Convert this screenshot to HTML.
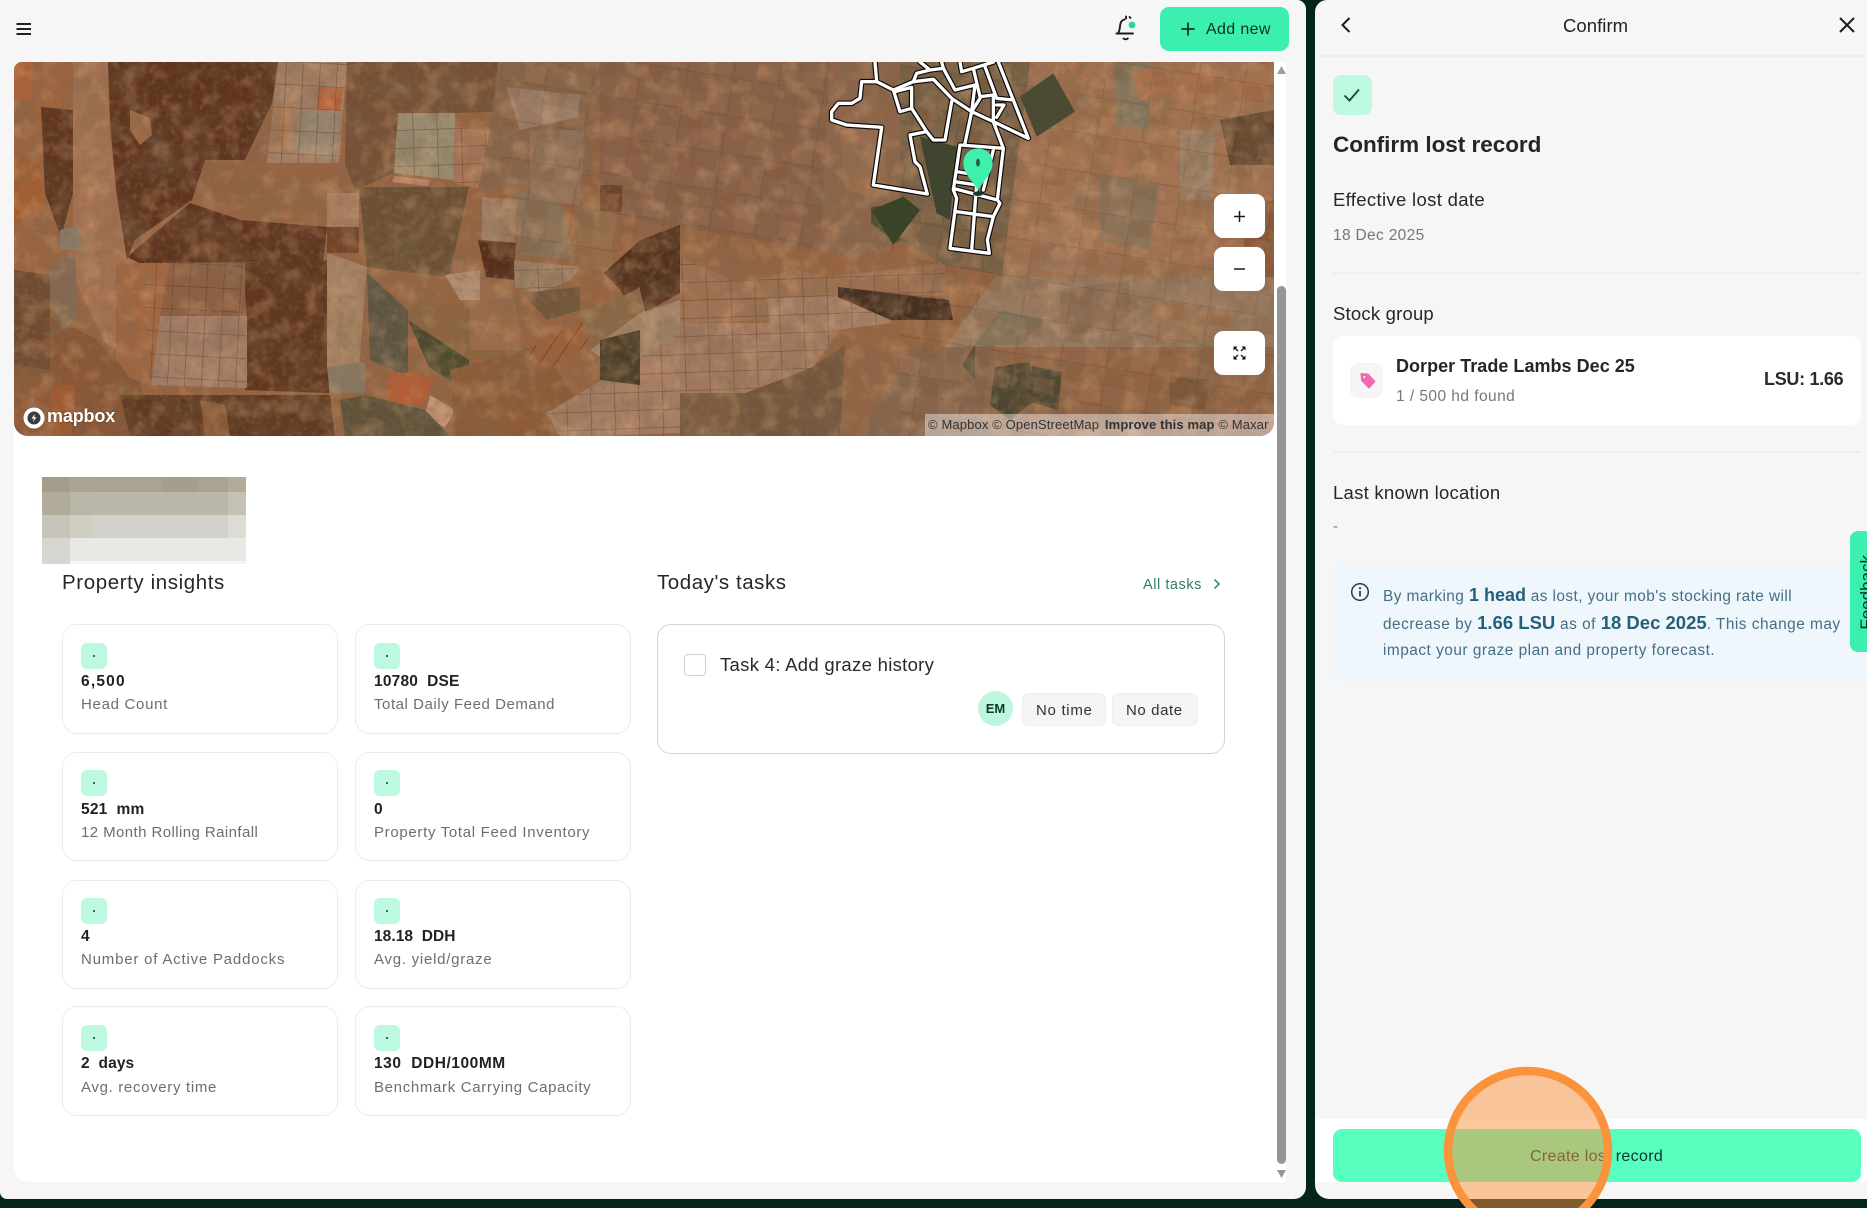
<!DOCTYPE html>
<html lang="en">
<head>
<meta charset="utf-8">
<title>Confirm lost record</title>
<style>
html,body{margin:0;padding:0;width:1867px;height:1208px;overflow:hidden;background:#03251c;font-family:"Liberation Sans",sans-serif;color:#1f1f1f}
.a{position:absolute}
.t{position:absolute;white-space:nowrap;line-height:1}
.card{position:absolute;box-sizing:border-box;width:276px;background:#fff;border:1px solid #ececec;border-radius:15px}
.ic{position:absolute;width:26px;height:26px;background:#bdf8e0;border-radius:6px}
.ic:after{content:"";position:absolute;left:12px;top:12px;width:2px;height:2px;border-radius:50%;background:#0b3b2d}
.v{font-size:15.5px;font-weight:bold;letter-spacing:.55px;color:#222}
.l{font-size:15px;letter-spacing:.8px;color:#6e6e6e}
.h{font-size:18.5px;letter-spacing:.2px;color:#272727}
.p{font-size:15.4px;letter-spacing:.5px;color:#446f84}
.p b{font-size:18px;letter-spacing:0;color:#24607b}
.mb{position:absolute;left:1214px;width:51px;height:44px;background:#fff;border-radius:9px}
</style>
</head>
<body>
<!-- left panel -->
<div class="a" style="left:0;top:0;width:1306px;height:1199px;background:#f6f6f6;border-radius:0 9px 12px 7px"></div>
<!-- right panel -->
<div class="a" style="left:1315px;top:0;width:552px;height:1199px;background:#f6f6f6;border-radius:12px 0 0 14px"></div>
<!-- white content -->
<div class="a" style="left:14px;top:62px;width:1272px;height:1120px;background:#fff;border-radius:10px 0 0 14px"></div>

<!-- hamburger -->
<svg class="a" style="left:14px;top:20px" width="20" height="18" viewBox="0 0 20 18"><path d="M2.500 4H17M2.500 9H17M2.500 14H17" stroke="#222" stroke-width="1.900" fill="none"/></svg>

<!-- bell -->
<svg class="a" style="left:1112px;top:12px" width="28" height="32" viewBox="0 0 28 32"><path d="M6 21.500c1.600-2.500 1.800-5 2.100-8 .3-3 1.800-5.500 4.400-6M14 4.500v2M17.500 5l1 1M4.500 21.500H21M11.500 26.500c1.300 1 3 1 4.300 0" stroke="#1c1c1c" stroke-width="1.900" fill="none" stroke-linecap="round"/><circle cx="20" cy="13" r="3.400" fill="#2ed39a"/></svg>

<!-- add new -->
<div class="a" style="left:1160px;top:7px;width:129px;height:44px;background:#3bf0ae;border-radius:9px"></div>
<svg class="a" style="left:1180px;top:21px" width="16" height="16" viewBox="0 0 16 16"><path d="M8 1.500V14.500M1.500 8H14.500" stroke="#0c2f25" stroke-width="1.700" fill="none"/></svg>
<div class="t" style="left:1206px;top:22px;font-size:16px;letter-spacing:.36px;color:#0c2f25">Add new</div>

<!-- map -->
<div class="a" style="left:14px;top:62px;width:1260px;height:374px;overflow:hidden;border-radius:8px 0 14px 14px">
<svg width="1260" height="374" viewBox="14 62 1260 374" style="display:block">
<defs>
<pattern id="g1" width="17" height="23" patternUnits="userSpaceOnUse" patternTransform="rotate(3)"><path d="M0 0H17M0 0V23" stroke="#4c2d1d" stroke-opacity=".6" stroke-width="1.300" fill="none"/></pattern>
<pattern id="g2" width="24" height="18" patternUnits="userSpaceOnUse" patternTransform="rotate(-2)"><path d="M0 0H24M0 0V18" stroke="#4c2d1d" stroke-opacity=".6" stroke-width="1.200" fill="none"/></pattern>
<pattern id="g3" width="13" height="60" patternUnits="userSpaceOnUse" patternTransform="rotate(34)"><path d="M0 0V60" stroke="#402618" stroke-opacity=".65" stroke-width="1.500" fill="none"/></pattern>
<pattern id="g4" width="46" height="38" patternUnits="userSpaceOnUse" patternTransform="rotate(9)"><path d="M0 0H46M0 0V38" stroke="#4a2e1d" stroke-opacity=".32" stroke-width="1.400" fill="none"/><rect x="2" y="2" width="20" height="16" fill="#7c5233" fill-opacity=".22"/><rect x="24" y="20" width="20" height="16" fill="#c18a62" fill-opacity=".2"/></pattern>
<filter id="n1" x="0" y="0" width="100%" height="100%"><feTurbulence type="fractalNoise" baseFrequency=".028" numOctaves="4" seed="7"/><feColorMatrix values="0 0 0 0 .2  0 0 0 0 .13  0 0 0 0 .07  0 0 0 2.200 -.95"/></filter>
<filter id="n2" x="0" y="0" width="100%" height="100%"><feTurbulence type="fractalNoise" baseFrequency=".05" numOctaves="3" seed="21"/><feColorMatrix values="0 0 0 0 .72  0 0 0 0 .4  0 0 0 0 .2  0 0 0 2.200 -1.050"/></filter>
<filter id="n3" x="0" y="0" width="100%" height="100%"><feTurbulence type="fractalNoise" baseFrequency=".16" numOctaves="2" seed="4"/><feColorMatrix values="0 0 0 0 .22  0 0 0 0 .16  0 0 0 0 .1  0 0 0 3 -1.500"/></filter>
</defs>
<rect x="14" y="62" width="1260" height="374" fill="#9a6a4a"/>
<!-- broad tones, left side -->
<polygon points="14,62 73,62 73,280 14,300" fill="#a06a47"/>
<polygon points="73,62 108,62 110,137 122,227 139,260 139,353 114,360 73,277" fill="#aa7a5c"/>
<polygon points="14,300 141,360 141,436 14,436" fill="#8a5a3c"/>
<polygon points="41,107 73,110 73,193 61,237 45,193" fill="#5a3420"/>
<polygon points="14,62 32,62 32,100 14,100" fill="#b5693f"/>
<polygon points="14,155 40,160 42,210 14,225" fill="#ad6336"/>
<polygon points="14,270 50,275 50,370 14,365" fill="#6d4a33"/>
<polygon points="108,62 278,62 272,103 245,160 205,160 192,200 135,240 127,260 116,190 110,120" fill="#583220"/>
<polygon points="127,257 190,203 241,220 327,227 323,262 139,263" fill="#583220"/>
<polygon points="130,110 150,118 152,135 140,145 130,130" fill="#a0704f"/>
<polygon points="205,163 245,163 262,135 268,170 260,205 235,213 198,200" fill="#94684a"/>
<polygon points="50,265 75,250 78,320 62,330 50,300" fill="#85705e"/>
<polygon points="60,230 80,225 82,250 60,250" fill="#8f8a7c"/>
<polygon points="245,263 327,260 329,393 245,390" fill="#5a3420"/>
<polygon points="14,375 60,378 60,436 14,436" fill="#93603e"/>
<polygon points="50,385 75,385 72,436 48,436" fill="#a85e36"/>
<polygon points="120,395 330,395 335,436 130,436" fill="#5b3824"/>
<polygon points="200,400 225,405 230,436 205,436" fill="#8a5b3c"/>
<polygon points="116,265 141,263 151,385 130,378 116,360" fill="#a36c49"/>
<!-- top-left farm -->
<polygon points="278,62 347,62 339,163 267,163" fill="#a98a72"/>
<polygon points="318,87 343,87 340,110 316,110" fill="#c7643f"/>
<polygon points="278,105 292,105 288,145 272,145" fill="#b57f5c"/>
<polygon points="300,110 340,112 335,160 295,150" fill="#9c9682"/>
<polygon points="278,62 347,62 339,163 267,163" fill="url(#g1)"/>
<!-- bottom left farm -->
<polygon points="141,263 243,263 247,320 160,316" fill="#8e644a"/>
<polygon points="160,316 247,316 247,388 151,385" fill="#ab8976"/>
<polygon points="141,263 170,263 160,316 151,385 136,380" fill="#a96e48"/>
<polygon points="141,263 243,263 247,388 151,385" fill="url(#g1)"/>
<!-- centre-left -->
<polygon points="347,62 498,62 495,112 455,113 398,113 394,173 355,190 345,165" fill="#74523a"/>
<polygon points="398,113 455,113 453,180 394,173" fill="#9d9a84"/>
<polygon points="455,127 492,132 486,190 453,183" fill="#b07f64"/>
<polygon points="398,113 455,113 453,180 394,173" fill="url(#g2)"/>
<polygon points="455,127 492,132 486,190 453,183" fill="url(#g2)"/>
<polygon points="394,176 430,180 428,186 392,182" fill="#c79478"/>
<polygon points="327,193 359,193 359,227 327,227" fill="#b08a6e"/>
<polygon points="327,227 359,227 359,253 327,253" fill="#70432a"/>
<polygon points="327,253 367,267 359,367 327,367" fill="#ad8d70"/>
<polygon points="327,367 365,362 365,393 330,393" fill="#8a8370"/>
<polygon points="359,187 469,187 449,277 367,267" fill="#65523a"/>
<polygon points="367,273 408,310 408,377 370,360" fill="#55584a"/>
<polygon points="408,310 470,300 520,300 515,360 469,360 408,320" fill="#8e6a48"/>
<polygon points="408,320 469,360 469,393 429,367" fill="#3f4a2f"/>
<polygon points="386,370 437,377 424,403 388,403" fill="#bf623c"/>
<polygon points="430,395 455,410 445,428 425,415" fill="#d3a48b"/>
<polygon points="365,395 425,410 450,436 345,436 340,400" fill="#5a5640"/>
<polygon points="450,370 540,345 600,436 455,436" fill="#8f5f3e"/>
<!-- upper centre -->
<polygon points="498,62 600,62 590,180 478,190 490,130" fill="#8a6a52"/>
<polygon points="506,87 580,95 578,117 520,130" fill="#a08a78"/>
<polygon points="530,130 585,130 580,205 530,200" fill="#937a66"/>
<polygon points="600,62 830,62 820,250 600,215" fill="#8a6550"/>
<polygon points="600,185 622,185 622,212 600,210" fill="#6b4530"/>
<polygon points="482,197 518,200 514,242 482,240" fill="#a58a72"/>
<polygon points="478,240 516,243 514,280 486,277" fill="#4f2b1c"/>
<polygon points="516,190 560,200 575,260 520,255" fill="#8a7a64"/>
<polygon points="575,205 620,215 610,275 580,265" fill="#9a7454"/>
<polygon points="604,273 640,240 680,225 680,293 638,317 620,290" fill="#4a2f1f"/>
<polygon points="604,273 640,240 680,225 680,293 638,317 620,290" fill="url(#g3)"/>
<polygon points="514,260 580,267 571,280 539,293 514,287" fill="#a58f78"/>
<polygon points="514,260 580,267 571,280 539,293 514,287" fill="url(#g2)"/>
<polygon points="522,293 580,287 580,310 547,320" fill="#6f5a41"/>
<polygon points="470,275 514,290 522,350 470,350" fill="#a07352"/>
<polygon points="445,275 480,270 480,300 460,300" fill="#b89a82"/>
<polygon points="522,353 640,287 640,313 547,370" fill="#a06640"/>
<polygon points="522,353 640,287 640,313 547,370" fill="url(#g3)"/>
<polygon points="580,310 640,290 650,330 590,350" fill="#8c6e4e"/>
<rect x="500" y="62" width="400" height="190" fill="url(#g4)"/>
<!-- central big farms -->
<polygon points="680,257 738,283 796,270 829,277 945,263 945,297 838,287 838,333 771,333 767,298 680,300" fill="#a2795c"/>
<polygon points="680,257 738,283 796,270 829,277 829,300 680,300" fill="url(#g2)"/>
<polygon points="829,277 945,263 945,297 838,287" fill="url(#g2)"/>
<polygon points="680,300 767,300 767,320 680,323" fill="#a67c5f"/>
<polygon points="680,300 767,300 767,320 680,323" fill="url(#g2)"/>
<polygon points="767,298 891,295 891,323 838,330 771,333" fill="#ac8a73"/>
<polygon points="767,298 891,295 891,323 838,330 771,333" fill="url(#g2)"/>
<polygon points="838,287 949,300 953,320 891,320 838,297" fill="#3c2c22"/>
<polygon points="680,323 771,323 838,333 813,367 746,393 680,393" fill="#a8846e"/>
<polygon points="680,323 771,323 838,333 813,367 746,393 680,393" fill="url(#g2)"/>
<polygon points="547,413 680,333 680,433 597,436 560,436" fill="#ae8a73"/>
<polygon points="547,413 680,333 680,436 560,436" fill="url(#g2)"/>
<polygon points="640,313 680,300 680,333 620,370 590,350" fill="#ad927a"/>
<polygon points="600,340 640,330 640,385 600,380" fill="#3f3d2a"/>
<polygon points="680,393 746,393 730,436 680,436" fill="#7a6048"/>
<polygon points="746,393 813,367 845,345 840,436 730,436" fill="#705a44"/>
<!-- right side -->
<polygon points="830,62 900,62 900,240 860,260 820,250" fill="#8f6c54"/>
<polygon points="840,130 880,125 890,200 845,190" fill="#9c7456"/>
<polygon points="871,207 929,200 920,227 896,243 871,223" fill="#3d4a30"/>
<polygon points="900,62 1030,62 1030,280 945,265 900,240" fill="#74654e"/>
<polygon points="1030,62 1274,62 1274,290 1000,290" fill="#a67a5b"/>
<polygon points="1115,62 1150,62 1150,130 1115,125" fill="#85806c"/>
<polygon points="1130,70 1274,70 1274,100 1140,100" fill="#ae7a57"/>
<polygon points="1220,120 1274,110 1274,165 1230,165" fill="#5f4a35"/>
<polygon points="1180,130 1215,130 1212,200 1180,200" fill="#a08e78"/>
<polygon points="1100,175 1160,185 1150,250 1100,240" fill="#8d7c66"/>
<polygon points="1040,210 1090,215 1085,275 1040,270" fill="#ad8266"/>
<polygon points="1240,210 1274,200 1274,345 1250,300" fill="#8c5d3c"/>
<polygon points="995,277 1274,277 1274,347 945,347" fill="#9a846e"/>
<polygon points="1060,290 1130,280 1130,330 1060,335" fill="#8d7662"/>
<polygon points="1150,300 1230,310 1235,345 1150,340" fill="#a27f62"/>
<polygon points="860,347 1274,347 1274,436 840,436" fill="#956a4d"/>
<polygon points="912,350 995,345 990,436 860,436" fill="#876c56"/>
<polygon points="995,367 1030,362 1035,400 1010,420 990,405" fill="#414735"/>
<polygon points="1032,366 1062,372 1058,410 1030,402" fill="#434735"/>
<polygon points="1170,375 1210,380 1205,410 1170,405" fill="#7d5a3f"/>
<polygon points="1000,310 1045,320 1020,345 975,345" fill="#7f7d68"/>
<polygon points="962,365 975,345 975,380" fill="#3e4a3b"/>
<rect x="900" y="62" width="374" height="374" fill="url(#g4)"/>
<!-- noise -->
<rect x="14" y="62" width="1260" height="374" fill="#8a4a20" opacity=".17"/>
<rect x="14" y="62" width="1260" height="374" filter="url(#n1)" opacity=".42"/>
<rect x="14" y="62" width="1260" height="374" filter="url(#n2)" opacity=".42"/>
<rect x="14" y="62" width="1260" height="374" filter="url(#n3)" opacity=".42"/>
<!-- diamond forest + paddock outlines in zoom coordinates -->
<g transform="translate(780 40) scale(.33333)">
<polygon points="820,100 885,215 770,290 720,170" fill="#4b4a33"/>
<polygon points="420,290 530,320 510,540 470,520 450,430" fill="#40452f"/>
<polygon points="275,510 370,470 420,510 340,615" fill="#39432a"/>
<g fill="none" stroke-linejoin="round" stroke-linecap="round">
<g stroke="#0b0b0b" stroke-width="17">
<path d="M285 66 290 125 245 125 240 175 215 190 175 190 155 215 155 240 200 255 305 262 280 435 442 462 420 380 405 365 390 285 440 275 460 300 495 300 515 185M290 125 340 150 400 125 460 118 515 175 575 215 640 245 745 295M340 150 360 215 395 205 440 275M345 155 395 142 395 205M400 125 410 100 450 90 420 66M450 90 490 85 525 150 585 135 575 215M490 85 485 66M540 66 545 95 580 85 640 66M580 85 600 170 640 165M615 80 650 175 700 180 745 295M655 66 745 295M600 175 575 215M640 170 640 245M650 195 672 195 650 232M640 245 670 325M575 215 555 310M540 315 670 325 652 480 660 490 640 530 622 600 628 640 510 625 530 475 520 450 540 315M520 445 652 480M530 395 590 405M525 425 590 435M530 515 640 530M590 430 575 630M640 330 610 450"/>
</g>
<g stroke="#fff" stroke-width="10">
<path d="M285 66 290 125 245 125 240 175 215 190 175 190 155 215 155 240 200 255 305 262 280 435 442 462 420 380 405 365 390 285 440 275 460 300 495 300 515 185M290 125 340 150 400 125 460 118 515 175 575 215 640 245 745 295M340 150 360 215 395 205 440 275M345 155 395 142 395 205M400 125 410 100 450 90 420 66M450 90 490 85 525 150 585 135 575 215M490 85 485 66M540 66 545 95 580 85 640 66M580 85 600 170 640 165M615 80 650 175 700 180 745 295M655 66 745 295M600 175 575 215M640 170 640 245M650 195 672 195 650 232M640 245 670 325M575 215 555 310M540 315 670 325 652 480 660 490 640 530 622 600 628 640 510 625 530 475 520 450 540 315M520 445 652 480M530 395 590 405M525 425 590 435M530 515 640 530M590 430 575 630M640 330 610 450"/>
</g>
</g>
<ellipse cx="594" cy="461" rx="15" ry="7" fill="#173a2a"/>
<path d="M594 452C580 425 550 402 550 368 550 343 570 325 594 325 618 325 638 343 638 368 638 402 608 425 594 452Z" fill="#3df0ab"/>
<ellipse cx="594" cy="368" rx="6" ry="12" fill="#2f5a48"/>
</g>
</svg>
<!-- mapbox logo -->
<svg class="a" style="left:8px;top:344px" width="24" height="24" viewBox="0 0 24 24"><circle cx="12" cy="12" r="10.500" fill="#fff"/><circle cx="12" cy="12" r="6.500" fill="#3c3c3c"/><path d="M12.800 8 9.500 12.500h2.300L11 16l3.500-4.800h-2.300z" fill="#fff"/></svg>
<div class="t" style="left:33px;top:345px;font-size:18px;font-weight:bold;letter-spacing:-.15px;color:#fff;text-shadow:0 0 2px rgba(0,0,0,.35)">mapbox</div>
<!-- attribution -->
<div class="a" style="left:911px;top:352px;width:349px;height:22px;background:rgba(255,255,255,.42)"></div>
<div class="t" style="left:914px;top:356px;font-size:13px;letter-spacing:.13px;color:#333">© Mapbox © OpenStreetMap <b style="margin-left:2px">Improve this map</b> © Maxar</div>
</div>

<!-- map controls -->
<div class="mb" style="top:194px"></div>
<div class="mb" style="top:247px"></div>
<div class="mb" style="top:331px"></div>
<svg class="a" style="left:1232px;top:209px" width="15" height="15" viewBox="0 0 15 15"><path d="M7.500 2V13M2 7.500H13" stroke="#1a1a1a" stroke-width="1.500" fill="none"/></svg>
<svg class="a" style="left:1232px;top:261px" width="15" height="15" viewBox="0 0 15 15"><path d="M2 8H13" stroke="#1a1a1a" stroke-width="1.500" fill="none"/></svg>
<svg class="a" style="left:1232px;top:345px" width="15" height="16" viewBox="0 0 15 16"><path d="M1.500 1.500H5.500L1.500 5.500ZM13.500 1.500H9.500L13.500 5.500ZM1.500 14.500H5.500L1.500 10.500ZM13.500 14.500H9.500L13.500 10.500Z" fill="#111"/><path d="M3 3 6 6M12 3 9 6M3 13 6 10M12 13 9 10" stroke="#111" stroke-width="1.300"/></svg>

<!-- scrollbar -->
<svg class="a" style="left:1276px;top:64px" width="11" height="12" viewBox="0 0 11 12"><path d="M5.500 2 10 10H1Z" fill="#a0a0a0"/></svg>
<div class="a" style="left:1277px;top:286px;width:9px;height:878px;background:#959595;border-radius:5px"></div>
<svg class="a" style="left:1276px;top:1169px" width="11" height="10" viewBox="0 0 11 10"><path d="M1 1H10L5.500 9Z" fill="#959595"/></svg>

<!-- blurred block -->
<svg class="a" style="left:42px;top:477px" width="204" height="87" viewBox="0 0 204 87" shape-rendering="crispEdges">
<rect width="204" height="15" fill="#a9a392"/><rect width="204" height="23" y="15" fill="#bbb7a8"/><rect width="204" height="23" y="38" fill="#d3d2ca"/><rect width="204" height="23" y="61" fill="#e8e8e4"/><rect width="204" height="3" y="84" fill="#f5f5f3"/>
<rect width="28" height="15" fill="#a49d8c"/><rect width="28" height="23" y="15" fill="#b0ab9b"/><rect width="28" height="23" y="38" fill="#c7c5bb"/><rect width="28" height="26" y="61" fill="#d7d7d2"/>
<rect x="28" width="22" height="23" y="38" fill="#d0cec2"/><rect x="28" width="22" height="15" fill="#aaa493"/>
<rect x="120" width="36" height="15" fill="#a49e8d"/><rect x="186" width="18" height="15" fill="#b1ab9a"/><rect x="186" width="18" height="23" y="15" fill="#c5c2b4"/><rect x="186" width="18" height="23" y="38" fill="#dcdbd4"/>
</svg>

<!-- insights -->
<div class="t h" style="left:62px;top:573px;font-size:20.500px;letter-spacing:.6px">Property insights</div>

<div class="card" style="left:62px;top:624px;height:110px"></div>
<div class="card" style="left:355px;top:624px;height:110px"></div>
<div class="card" style="left:62px;top:752px;height:109px"></div>
<div class="card" style="left:355px;top:752px;height:109px"></div>
<div class="card" style="left:62px;top:880px;height:109px"></div>
<div class="card" style="left:355px;top:880px;height:109px"></div>
<div class="card" style="left:62px;top:1006px;height:110px"></div>
<div class="card" style="left:355px;top:1006px;height:110px"></div>

<div class="ic" style="left:81px;top:643px"></div><div class="ic" style="left:374px;top:643px"></div>
<div class="ic" style="left:81px;top:770px"></div><div class="ic" style="left:374px;top:770px"></div>
<div class="ic" style="left:81px;top:898px"></div><div class="ic" style="left:374px;top:898px"></div>
<div class="ic" style="left:81px;top:1025px"></div><div class="ic" style="left:374px;top:1025px"></div>

<div class="t v" style="left:81px;top:674px;letter-spacing:1.2px">6,500</div>
<div class="t l" style="left:81px;top:697px;letter-spacing:.7px">Head Count</div>
<div class="t v" style="left:374px;top:674px;white-space:pre;letter-spacing:.2px">10780  DSE</div>
<div class="t l" style="left:374px;top:697px;letter-spacing:.55px">Total Daily Feed Demand</div>
<div class="t v" style="left:81px;top:802px;white-space:pre;letter-spacing:.2px">521  mm</div>
<div class="t l" style="left:81px;top:825px;letter-spacing:.42px">12 Month Rolling Rainfall</div>
<div class="t v" style="left:374px;top:802px">0</div>
<div class="t l" style="left:374px;top:825px;letter-spacing:.68px">Property Total Feed Inventory</div>
<div class="t v" style="left:81px;top:929px">4</div>
<div class="t l" style="left:81px;top:952px">Number of Active Paddocks</div>
<div class="t v" style="left:374px;top:929px;white-space:pre;letter-spacing:.05px">18.18  DDH</div>
<div class="t l" style="left:374px;top:952px;letter-spacing:.75px">Avg. yield/graze</div>
<div class="t v" style="left:81px;top:1056px;white-space:pre;letter-spacing:.1px">2  days</div>
<div class="t l" style="left:81px;top:1080px;letter-spacing:.67px">Avg. recovery time</div>
<div class="t v" style="left:374px;top:1056px;white-space:pre">130  DDH/100MM</div>
<div class="t l" style="left:374px;top:1080px;letter-spacing:.67px">Benchmark Carrying Capacity</div>

<!-- tasks -->
<div class="t h" style="left:657px;top:573px;font-size:20.500px;letter-spacing:.55px">Today's tasks</div>
<div class="t" style="left:1143px;top:578px;font-size:14.500px;letter-spacing:.55px;color:#2f7d68">All tasks</div>
<svg class="a" style="left:1211px;top:577px" width="12" height="14" viewBox="0 0 12 14"><path d="M3.500 2.500 8 7 3.500 11.500" stroke="#2f7d68" stroke-width="1.500" fill="none"/></svg>

<div class="a" style="left:657px;top:624px;width:568px;height:130px;box-sizing:border-box;background:#fff;border:1px solid #d4d4d4;border-radius:14px"></div>
<div class="a" style="left:684px;top:654px;width:22px;height:22px;box-sizing:border-box;border:1px solid #cfcfcf;border-radius:4px;background:#fff"></div>
<div class="t" style="left:720px;top:656px;font-size:18.500px;letter-spacing:.3px;color:#2a2a2a">Task 4: Add graze history</div>
<div class="a" style="left:978px;top:691px;width:35px;height:35px;background:#bdf5dd;border-radius:50%"></div>
<div class="t" style="left:978px;width:35px;text-align:center;top:702px;font-size:13px;font-weight:bold;color:#0c3a2d">EM</div>
<div class="a" style="left:1022px;top:693px;width:84px;height:33px;box-sizing:border-box;background:#f5f5f5;border:1px solid #eee;border-radius:7px"></div>
<div class="a" style="left:1112px;top:693px;width:86px;height:33px;box-sizing:border-box;background:#f5f5f5;border:1px solid #eee;border-radius:7px"></div>
<div class="t" style="left:1036px;top:703px;font-size:15px;letter-spacing:.7px;color:#333">No time</div>
<div class="t" style="left:1126px;top:703px;font-size:15px;letter-spacing:.6px;color:#333">No date</div>

<!-- right panel content -->
<div class="a" style="left:1315px;top:55px;width:552px;height:2px;background:#efefef"></div>
<svg class="a" style="left:1338px;top:15px" width="16" height="20" viewBox="0 0 16 20"><path d="M11.500 3 4.500 10 11.500 17" stroke="#1c1c1c" stroke-width="2" fill="none"/></svg>
<div class="t" style="left:1563px;top:17px;font-size:18.500px;letter-spacing:.05px;color:#222">Confirm</div>
<svg class="a" style="left:1838px;top:16px" width="18" height="18" viewBox="0 0 18 18"><path d="M2 2 16 16M16 2 2 16" stroke="#1c1c1c" stroke-width="2" fill="none"/></svg>

<div class="a" style="left:1333px;top:75px;width:39px;height:40px;background:#bdf8e0;border-radius:8px"></div>
<svg class="a" style="left:1342px;top:85px" width="20" height="20" viewBox="0 0 20 20"><path d="M2.500 10.500 7.500 15.500 17 4.500" stroke="#0e4a38" stroke-width="1.800" fill="none"/></svg>
<div class="t" style="left:1333px;top:134px;font-size:22.500px;font-weight:bold;letter-spacing:-.02px;color:#252525">Confirm lost record</div>
<div class="t h" style="left:1333px;top:191px;letter-spacing:.33px">Effective lost date</div>
<div class="t" style="left:1333px;top:228px;font-size:15.500px;letter-spacing:.33px;color:#777">18 Dec 2025</div>
<div class="a" style="left:1333px;top:272px;width:528px;height:2px;background:#eee"></div>
<div class="t h" style="left:1333px;top:305px">Stock group</div>
<div class="a" style="left:1333px;top:336px;width:528px;height:89px;background:#fff;border-radius:10px"></div>
<div class="a" style="left:1350px;top:363px;width:33px;height:35px;background:#f5f5f5;border-radius:8px"></div>
<svg class="a" style="left:1358px;top:371px" width="20" height="20" viewBox="0 0 20 20"><path d="M3 2.500 10 3 17 10.500 11 17 3.500 9.500Z" fill="#ee6bb0" stroke="#ee6bb0" stroke-linejoin="round"/><circle cx="6.300" cy="6" r="1" fill="#fff"/></svg>
<div class="t" style="left:1396px;top:357px;font-size:18px;font-weight:bold;letter-spacing:.03px;color:#262626">Dorper Trade Lambs Dec 25</div>
<div class="t" style="left:1396px;top:389px;font-size:15.500px;letter-spacing:.45px;color:#777">1 / 500 hd found</div>
<div class="t" style="left:1764px;top:370px;font-size:18px;font-weight:bold;letter-spacing:-.3px;color:#2b2b2b">LSU: 1.66</div>
<div class="a" style="left:1333px;top:451px;width:528px;height:2px;background:#eee"></div>
<div class="t h" style="left:1333px;top:484px;letter-spacing:.26px">Last known location</div>
<div class="t" style="left:1333px;top:519px;font-size:15px;color:#777">-</div>

<div class="a" style="left:1333px;top:564px;width:534px;height:117px;background:#f0f7fc;border-radius:8px 0 0 8px"></div>
<svg class="a" style="left:1350px;top:582px" width="20" height="20" viewBox="0 0 20 20"><circle cx="10" cy="10" r="8.300" stroke="#1e3d4c" stroke-width="1.500" fill="none"/><path d="M10 9V14.500" stroke="#1e3d4c" stroke-width="1.700"/><circle cx="10" cy="6.200" r="1.100" fill="#1e3d4c"/></svg>
<div class="t p" style="left:1383px;top:586px;letter-spacing:.43px">By marking <b>1 head</b> as lost, your mob's stocking rate will</div>
<div class="t p" style="left:1383px;top:614px;letter-spacing:.5px">decrease by <b style="font-size:18.500px">1.66 LSU</b> as of <b style="font-size:18.500px">18 Dec 2025</b>. This change may</div>
<div class="t p" style="left:1383px;top:643px">impact your graze plan and property forecast.</div>

<!-- feedback -->
<div class="a" style="left:1850px;top:531px;width:17px;height:121px;background:#3bf0ae;border-radius:8px 0 0 8px;overflow:hidden">
<div class="t" style="left:8px;top:24px;writing-mode:vertical-rl;transform:rotate(180deg);font-size:17px;color:#0b2f25">Feedback</div>
</div>

<!-- create button -->
<div class="a" style="left:1315px;top:1119px;width:552px;height:63px;background:#fff"></div>
<div class="a" style="left:1333px;top:1129px;width:528px;height:53px;background:#58ffbe;border-radius:9px"></div>
<div class="t" style="left:1530px;top:1149px;font-size:16px;letter-spacing:.33px;color:#0c3529">Create lost record</div>

<!-- orange highlight -->
<svg class="a" style="left:1430px;top:1055px" width="200" height="153" viewBox="0 0 200 153"><circle cx="98" cy="96" r="80" fill="#fb923c" fill-opacity=".5" stroke="#fb923c" stroke-width="8.500"/></svg>
</body>
</html>
